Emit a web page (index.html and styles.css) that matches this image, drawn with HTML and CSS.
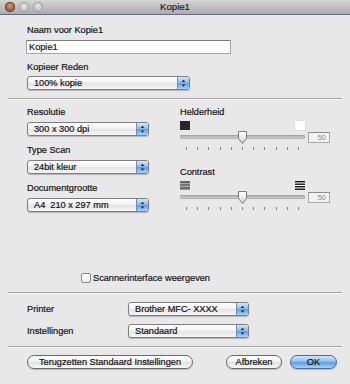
FILE: index.html
```html
<!DOCTYPE html>
<html>
<head>
<meta charset="utf-8">
<link rel="stylesheet" href="styles.css">
</head>
<body>
<div class="window">
  <div class="titlebar">
    <div class="lights"><span class="light close"></span><span class="light"></span><span class="light"></span></div>
    <div class="title">Kopie1</div>
    <div></div>
  </div>

  <section class="top">
    <div class="label">Naam voor Kopie1</div>
    <div class="textfield">Kopie1</div>
    <div class="label gap7">Kopieer Reden</div>
    <div class="popup w163 mt3"><span class="ptext">100% kopie</span><span class="arrows"><svg width="12" height="12" viewBox="0 0 12 12"><path d="M4 5 L6 2.5 L8 5 Z M4 7.5 L6 10 L8 7.5 Z" fill="#1a2a40"/></svg></span></div>
  </section>

  <div class="sep"></div>

  <section class="mid">
    <div class="col left">
      <div class="label">Resolutie</div>
      <div class="popup w122 mt4"><span class="ptext">300 x 300 dpi</span><span class="arrows"><svg width="12" height="12" viewBox="0 0 12 12"><path d="M4 5 L6 2.5 L8 5 Z M4 7.5 L6 10 L8 7.5 Z" fill="#1a2a40"/></svg></span></div>
      <div class="label gap8">Type Scan</div>
      <div class="popup w122 mt4"><span class="ptext">24bit kleur</span><span class="arrows"><svg width="12" height="12" viewBox="0 0 12 12"><path d="M4 5 L6 2.5 L8 5 Z M4 7.5 L6 10 L8 7.5 Z" fill="#1a2a40"/></svg></span></div>
      <div class="label gap8">Documentgrootte</div>
      <div class="popup w122 mt4"><span class="ptext">A4&nbsp; 210 x 297 mm</span><span class="arrows"><svg width="12" height="12" viewBox="0 0 12 12"><path d="M4 5 L6 2.5 L8 5 Z M4 7.5 L6 10 L8 7.5 Z" fill="#1a2a40"/></svg></span></div>
    </div>

    <div class="col right">
      <div class="label">Helderheid</div>
      <div class="swatches">
        <span class="sw-dark"></span>
        <span class="sw-light"></span>
      </div>
      <div class="slider-row">
        <div class="track-wrap">
          <div class="track"></div>
          <svg class="thumb" width="11" height="15" viewBox="0 0 11 15"><defs><linearGradient id="tg1" x1="0" y1="0" x2="0" y2="1"><stop offset="0" stop-color="#ffffff"/><stop offset="1" stop-color="#d4d4d4"/></linearGradient></defs><path d="M1.5 1.5 H9.5 V8.5 L5.5 13.5 L1.5 8.5 Z" fill="url(#tg1)" stroke="#7a7a7a" stroke-width="1" stroke-linejoin="round"/></svg>
        </div>
        <div class="valbox">50</div>
      </div>
      <div class="ticks"><i></i><i></i><i></i><i></i><i></i><i></i><i></i><i></i><i></i><i></i><i></i></div>

      <div class="label gap16">Contrast</div>
      <div class="swatches">
        <svg width="10" height="9" viewBox="0 0 10 9"><rect x="0" y="0" width="10" height="2" fill="#5f6a70"/><rect x="0" y="2" width="10" height="1" fill="#a8a8a8"/><rect x="0" y="3" width="10" height="2" fill="#767676"/><rect x="0" y="5" width="10" height="1" fill="#b0b0b0"/><rect x="0" y="6" width="10" height="2" fill="#6a6a6a"/><rect x="0" y="8" width="10" height="1" fill="#9a9a9a"/></svg>
        <svg width="10" height="9" viewBox="0 0 10 9"><rect x="0" y="0" width="10" height="9" fill="#ffffff"/><rect x="0" y="0" width="10" height="1.4" fill="#111"/><rect x="0" y="2.5" width="10" height="1.4" fill="#111"/><rect x="0" y="5" width="10" height="1.4" fill="#111"/><rect x="0" y="7.5" width="10" height="1.4" fill="#111"/></svg>
      </div>
      <div class="slider-row">
        <div class="track-wrap">
          <div class="track"></div>
          <svg class="thumb" width="11" height="15" viewBox="0 0 11 15"><defs><linearGradient id="tg2" x1="0" y1="0" x2="0" y2="1"><stop offset="0" stop-color="#ffffff"/><stop offset="1" stop-color="#d4d4d4"/></linearGradient></defs><path d="M1.5 1.5 H9.5 V8.5 L5.5 13.5 L1.5 8.5 Z" fill="url(#tg2)" stroke="#7a7a7a" stroke-width="1" stroke-linejoin="round"/></svg>
        </div>
        <div class="valbox">50</div>
      </div>
      <div class="ticks"><i></i><i></i><i></i><i></i><i></i><i></i><i></i><i></i><i></i><i></i><i></i></div>
    </div>
  </section>

  <div class="check-row">
    <span class="checkbox"></span>
    <span>Scannerinterface weergeven</span>
  </div>

  <div class="sep mt9"></div>

  <section class="printer">
    <div class="plabel">Printer</div>
    <div class="popup w121"><span class="ptext">Brother MFC- XXXX</span><span class="arrows"><svg width="12" height="12" viewBox="0 0 12 12"><path d="M4 5 L6 2.5 L8 5 Z M4 7.5 L6 10 L8 7.5 Z" fill="#1a2a40"/></svg></span></div>
    <div class="plabel">Instellingen</div>
    <div class="popup w121"><span class="ptext">Standaard</span><span class="arrows"><svg width="12" height="12" viewBox="0 0 12 12"><path d="M4 5 L6 2.5 L8 5 Z M4 7.5 L6 10 L8 7.5 Z" fill="#1a2a40"/></svg></span></div>
  </section>

  <div class="sep mt10"></div>

  <div class="buttons">
    <button class="btn reset">Terugzetten Standaard Instellingen</button>
    <button class="btn cancel">Afbreken</button>
    <button class="btn ok">OK</button>
  </div>
</div>
</body>
</html>
```

FILE: styles.css
```css
* { box-sizing: border-box; margin: 0; padding: 0; }
html, body { width: 350px; height: 384px; overflow: hidden; }
body {
  background: #e8e8e8;
  font-family: "Liberation Sans", Arial, sans-serif;
  font-size: 9.2px;
  color: #141414;
  -webkit-text-stroke: 0.2px currentColor;
}
.window { width: 350px; height: 384px; }

.titlebar {
  height: 15px;
  display: grid;
  grid-template-columns: 1fr auto 1fr;
  align-items: center;
  background: linear-gradient(#d4d4d4, #c2c2c2 45%, #acacac);
  border-bottom: 1px solid #5f6f8a;
}
.lights { display: flex; gap: 4px; padding-left: 5px; }
.light {
  width: 10px; height: 10px; border-radius: 50%;
  background: radial-gradient(circle at 50% 40%, #e6e6e6, #c0c0c0 60%, #9c9c9c);
  box-shadow: inset 0 0 0 0.5px #8a8a8a;
}
.light.close {
  background: radial-gradient(circle at 50% 40%, #d0a080, #9a6040 55%, #6e3c22);
  box-shadow: inset 0 0 0 0.5px #5a3018;
}
.title { font-size: 9.6px; color: #1e1e1e; line-height: 14px; }

.label { line-height: 12px; height: 12px; white-space: nowrap; }
.gap7 { margin-top: 7px; }
.gap8 { margin-top: 8px; }
.gap16 { margin-top: 16px; }
.mt3 { margin-top: 3px; }
.mt4 { margin-top: 4px; }
.mt9 { margin-top: 9px; }
.mt10 { margin-top: 10px; }

.top { padding: 9px 0 0 27px; }
.textfield {
  margin-top: 4px;
  margin-left: -1px;
  width: 205px; height: 14px;
  background: #fff;
  border: 1px solid #a4a4a4;
  border-top-color: #7c7c7c;
  padding-left: 2px;
  line-height: 12px;
}

.popup {
  display: flex;
  height: 14px;
  border: 1px solid #7e7e7e;
  border-radius: 3px;
  background: linear-gradient(#ffffff, #f3f3f3 45%, #e4e4e4 55%, #f6f6f6);
  box-shadow: 0 1px 1px rgba(0,0,0,0.22);
  overflow: hidden;
}
.w163 { width: 163px; }
.w122 { width: 122px; }
.w121 { width: 121px; }
.ptext { flex: 1; padding-left: 6px; line-height: 12px; white-space: nowrap; }
.arrows {
  width: 12px; height: 12px;
  background: linear-gradient(#d4e8fc, #8dbdf1 45%, #5f9fe7 55%, #a8d4fb);
  border-left: 1px solid #6d8fb8;
  display: flex;
}

.sep {
  margin: 8px 8px 0;
  height: 2px;
  border-top: 1px solid #a3a3a3;
  border-bottom: 1px solid #f6f6f6;
}

.mid { display: flex; padding: 6px 0 0 27px; }
.col.left { width: 122px; }
.col.right { width: 150px; margin-left: 31px; }

.swatches {
  margin-top: 2px;
  width: 125px; height: 10px;
  display: flex; justify-content: space-between; align-items: center;
}
.sw-dark { width: 10px; height: 9px; background: #2b242b; }
.sw-light { width: 10px; height: 9px; background: #ffffff; box-shadow: 0 0 0 0.5px #d8d8d8; }

.slider-row { height: 14px; display: flex; align-items: center; }
.track-wrap { position: relative; width: 125px; height: 14px; display: flex; align-items: center; }
.track {
  width: 125px; height: 4px; border-radius: 2px;
  background: linear-gradient(#a9a9a9, #d6d6d6);
  box-shadow: inset 0 0 0 0.5px #9a9a9a;
}
.thumb { position: absolute; left: 57px; top: 0px; }
.valbox {
  margin-left: 3px;
  width: 22px; height: 11px;
  background: #f2f2f2;
  border: 1px solid #a8a8a8;
  border-top-color: #8c8c8c;
  font-size: 7.5px; color: #8a8a8a;
  -webkit-text-stroke: 0;
  text-align: right; padding-right: 3px; line-height: 9px;
}
.ticks {
  margin-top: 3px; margin-left: 6px;
  width: 113px; height: 3px;
  display: flex; justify-content: space-between;
}
.ticks i { display: block; width: 1px; height: 3px; background: #858585; }

.check-row {
  margin-top: 60px;
  padding-left: 81px;
  height: 12px; line-height: 12px;
  display: flex; align-items: center;
}
.checkbox {
  width: 10px; height: 10px; margin-right: 2px;
  border: 1px solid #8a8a8a; border-radius: 2px;
  background: linear-gradient(#ffffff, #ececec);
}

.printer {
  margin-top: 8px;
  padding-left: 27px;
  display: grid;
  grid-template-columns: 101px 121px;
  row-gap: 8px;
  align-items: center;
}
.plabel { line-height: 12px; }

.buttons {
  margin-top: 7px;
  padding: 0 13px 0 27px;
  display: flex;
  align-items: center;
}
.btn {
  font-family: inherit; font-size: 9.2px; color: #141414;
  -webkit-text-stroke: 0.2px currentColor;
  height: 14px; line-height: 12px;
  border: 1px solid #6a6a6a;
  border-radius: 7px;
  background: linear-gradient(#ffffff, #f2f2f2 45%, #e2e2e2 55%, #fafafa);
  box-shadow: 0 1px 1px rgba(0,0,0,0.2);
  text-align: center;
}
.reset { width: 166px; }
.cancel { width: 56px; margin-left: auto; }
.ok {
  width: 47px; margin-left: 8px;
  border-color: #4d6b96;
  background: linear-gradient(#d2e6fb, #8fc0f2 45%, #5f9fe6 55%, #a5d3fb);
}
```
